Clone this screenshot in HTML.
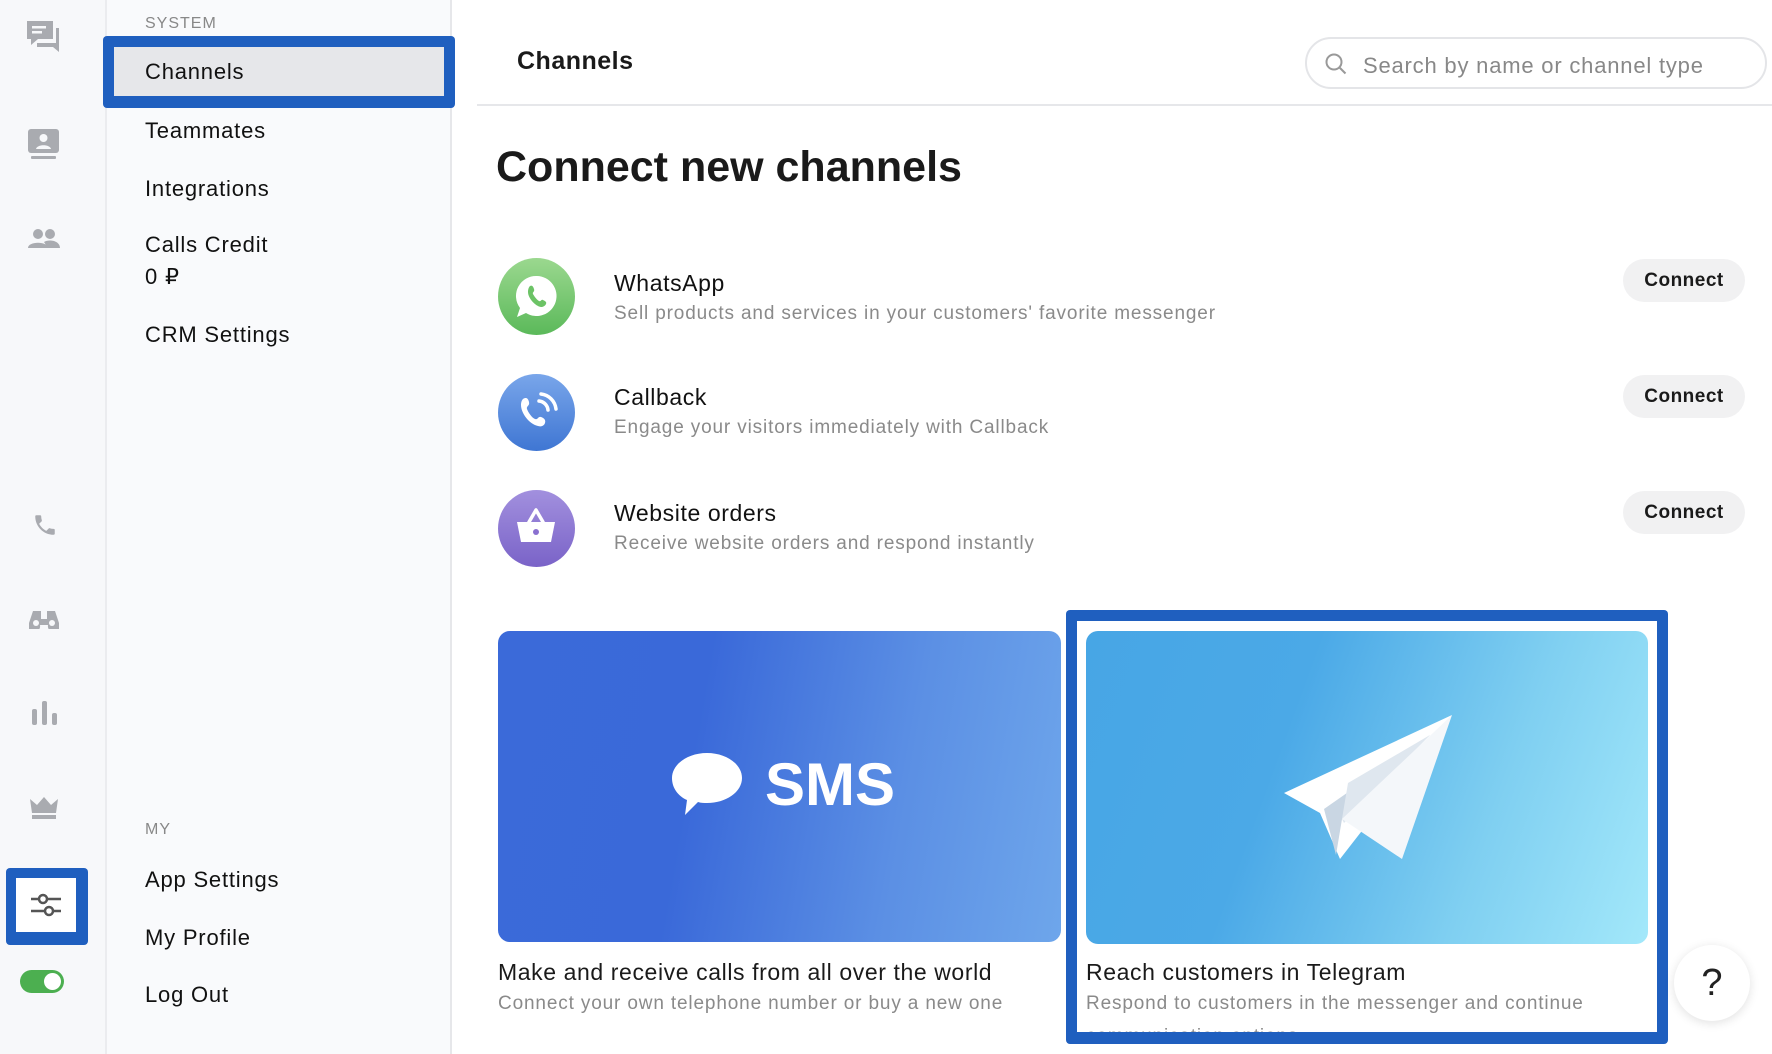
<!DOCTYPE html>
<html><head><meta charset="utf-8"><style>
*{margin:0;padding:0;box-sizing:border-box}
body{width:1772px;height:1054px;background:#fff;font-family:"Liberation Sans",sans-serif;color:#1a1a1a;position:relative;overflow:hidden}
.a{position:absolute;white-space:nowrap}
.rail{left:0;top:0;width:107px;height:1054px;background:#f7f8fa;border-right:2px solid #ebecef}
.side{left:107px;top:0;width:345px;height:1054px;background:#f9fafc;border-right:2px solid #e6e7ea}
.nav{left:145px;font-size:22px;letter-spacing:.8px;color:#111}
.lab{left:145px;font-size:16px;letter-spacing:1px;color:#888}
.ic{fill:#a9abb0}
.t{font-size:23px;color:#111;left:614px;letter-spacing:.6px}
.s{font-size:19px;color:#8a8a8a;left:614px;letter-spacing:.85px}
.btn{left:1623px;width:122px;height:43px;border-radius:22px;background:#f1f1f2;font-size:19px;font-weight:bold;text-align:center;line-height:43px;letter-spacing:.5px}
.circ{left:498px;width:77px;height:77px;border-radius:50%}
</style></head><body>
<div class="a rail"></div>
<div class="a side"></div>
<svg class="a" style="left:24px;top:18px" width="38" height="38" viewBox="0 0 38 38"><path class="ic" d="M3 3h26v18H14l-7 6v-6H3z"/><path class="ic" d="M32 10h3v24l-6-5H13v-4h19z"/><rect x="8" y="8" width="14" height="2.5" fill="#f7f8fa"/><rect x="8" y="13" width="10" height="2.5" fill="#f7f8fa"/></svg>
<svg class="a" style="left:27px;top:127px" width="34" height="38" viewBox="0 0 34 38"><rect class="ic" x="1" y="2" width="31" height="24" rx="3"/><circle cx="16.5" cy="11" r="4" fill="#f7f8fa"/><path d="M9 22c1-5 14-5 15 0z" fill="#f7f8fa"/><rect class="ic" x="4" y="29" width="25" height="3" rx="1"/></svg>
<svg class="a" style="left:28px;top:228px" width="32" height="22" viewBox="0 0 32 22"><circle class="ic" cx="10" cy="6" r="5"/><circle class="ic" cx="22" cy="6" r="5"/><path class="ic" d="M0 20c0-7 20-7 20 0zM16 14c4-3 16-2 16 6H20z"/></svg>
<svg class="a" style="left:32px;top:512px" width="26" height="26" viewBox="0 0 24 24"><path class="ic" d="M6.6 10.8c1.4 2.8 3.8 5.1 6.6 6.6l2.2-2.2c.3-.3.7-.4 1-.2 1.1.4 2.3.6 3.6.6.6 0 1 .4 1 1V20c0 .6-.4 1-1 1C10.6 21 3 13.4 3 4c0-.6.4-1 1-1h3.5c.6 0 1 .4 1 1 0 1.3.2 2.5.6 3.6.1.3 0 .7-.2 1z"/></svg>
<svg class="a" style="left:29px;top:607px" width="30" height="22" viewBox="0 0 30 22"><path class="ic" d="M4 4h8v8h6V4h8l4 12a6 6 0 1 1-11 2h-8a6 6 0 1 1-11-2z"/><circle cx="7" cy="16" r="3" fill="#f7f8fa"/><circle cx="23" cy="16" r="3" fill="#f7f8fa"/></svg>
<svg class="a" style="left:31px;top:700px" width="28" height="26" viewBox="0 0 28 26"><rect class="ic" x="1" y="9" width="5" height="16" rx="2"/><rect class="ic" x="11" y="1" width="5" height="24" rx="2"/><rect class="ic" x="21" y="13" width="5" height="12" rx="2"/></svg>
<svg class="a" style="left:29px;top:796px" width="30" height="24" viewBox="0 0 30 24"><path class="ic" d="M1 3l7 6 7-8 7 8 7-6-2 14H3z"/><rect class="ic" x="3" y="19" width="24" height="4"/></svg>
<div class="a" style="left:6px;top:868px;width:82px;height:77px;background:#1f5fbf;border-radius:4px"></div>
<div class="a" style="left:16px;top:878px;width:60px;height:54px;background:#fff"></div>
<svg class="a" style="left:30px;top:890px" width="32" height="30" viewBox="0 0 32 30"><path d="M1 9h30M1 21h30" stroke="#555" stroke-width="2.5"/><circle cx="13" cy="9" r="4" fill="#fff" stroke="#555" stroke-width="2.5"/><circle cx="19" cy="21" r="4" fill="#fff" stroke="#555" stroke-width="2.5"/></svg>
<div class="a" style="left:20px;top:970px;width:44px;height:23px;border-radius:12px;background:#4caf50"></div>
<div class="a" style="left:44px;top:973px;width:17px;height:17px;border-radius:50%;background:#fff"></div>
<div class="a lab" style="top:15px">SYSTEM</div>
<div class="a" style="left:103px;top:36px;width:352px;height:72px;background:#1f5fbf;border-radius:4px"></div>
<div class="a" style="left:114px;top:47px;width:330px;height:49px;background:#e6e7ea"></div>
<div class="a nav" style="top:59px">Channels</div>
<div class="a nav" style="top:118px">Teammates</div>
<div class="a nav" style="top:176px">Integrations</div>
<div class="a nav" style="top:232px">Calls Credit</div>
<div class="a nav" style="top:264px">0 ₽</div>
<div class="a nav" style="top:322px">CRM Settings</div>
<div class="a lab" style="top:821px">MY</div>
<div class="a nav" style="top:867px">App Settings</div>
<div class="a nav" style="top:925px">My Profile</div>
<div class="a nav" style="top:982px">Log Out</div>
<div class="a" style="left:517px;top:47px;font-size:25px;font-weight:bold;letter-spacing:.5px">Channels</div>
<div class="a" style="left:477px;top:104px;width:1295px;height:2px;background:#e6e7ea"></div>
<div class="a" style="left:1305px;top:37px;width:462px;height:52px;border:2px solid #e4e5e8;border-radius:26px"></div>
<svg class="a" style="left:1324px;top:52px" width="24" height="24" viewBox="0 0 24 24"><circle cx="10" cy="10" r="7.5" fill="none" stroke="#999" stroke-width="2"/><path d="M15.5 15.5l6 6" stroke="#999" stroke-width="2"/></svg>
<div class="a" style="left:1363px;top:53px;font-size:22px;color:#888;letter-spacing:.8px">Search by name or channel type</div>
<div class="a" style="left:496px;top:143px;font-size:43px;font-weight:bold;letter-spacing:0">Connect new channels</div>
<div class="a circ" style="top:258px;background:linear-gradient(#9bd88f,#5bb95a)"></div>
<svg class="a" style="left:513px;top:272px" width="48" height="50" viewBox="0 0 48 50"><path d="M24 4a20 20 0 1 1-11 37l-9 4 3-9A20 20 0 0 1 24 4z" fill="#fff"/><path d="M17 14c2-1 3 0 4 3s-2 3-1 5 4 6 6 7 2-2 4-1 4 2 3 4-3 3-5 3c-6-1-13-9-13-15 0-3 1-5 2-6z" fill="#6cc366"/></svg>
<div class="a t" style="top:270px">WhatsApp</div>
<div class="a s" style="top:303px">Sell products and services in your customers' favorite messenger</div>
<div class="a btn" style="top:259px">Connect</div>
<div class="a circ" style="top:374px;background:linear-gradient(#79a6ea,#3f76d3)"></div>
<svg class="a" style="left:515px;top:391px" width="44" height="44" viewBox="0 0 44 44"><path d="M8 8c3-2 5-1 6 3s-3 4-2 7 5 9 8 10 3-3 6-2 5 3 4 6-4 4-7 3C14 33 6 22 6 14c0-3 1-5 2-6z" fill="#fff"/><path d="M24 10a10 10 0 0 1 9 9M26 3a17 17 0 0 1 15 15" stroke="#fff" stroke-width="3.5" fill="none" stroke-linecap="round"/></svg>
<div class="a t" style="top:384px">Callback</div>
<div class="a s" style="top:417px">Engage your visitors immediately with Callback</div>
<div class="a btn" style="top:375px">Connect</div>
<div class="a circ" style="top:490px;background:linear-gradient(#a290de,#7a63c8)"></div>
<svg class="a" style="left:514px;top:507px" width="44" height="40" viewBox="0 0 44 40"><path d="M22 3l-7 12M22 3l7 12" stroke="#fff" stroke-width="3.5" stroke-linecap="round"/><path d="M3 15h38l-4 20H7z" fill="#fff"/><circle cx="22" cy="25" r="3" fill="#8a70d0"/></svg>
<div class="a t" style="top:500px">Website orders</div>
<div class="a s" style="top:533px">Receive website orders and respond instantly</div>
<div class="a btn" style="top:491px">Connect</div>
<div class="a" style="left:498px;top:631px;width:563px;height:311px;border-radius:12px;background:linear-gradient(100deg,#3b6ad9 0%,#3a69d9 35%,#5b8fe4 70%,#6ea6eb 100%)"></div>
<svg class="a" style="left:671px;top:751px" width="72" height="66" viewBox="0 0 72 66"><path d="M36 2c19 0 35 11 35 25S55 52 36 52c-3 0-6 0-9-1l-13 13 2-15C7 45 1 37 1 27 1 13 17 2 36 2z" fill="#fff"/></svg>
<div class="a" style="left:765px;top:750px;font-size:60px;font-weight:bold;color:#fff">SMS</div>
<div class="a" style="left:498px;top:959px;font-size:23px;letter-spacing:.6px">Make and receive calls from all over the world</div>
<div class="a s" style="left:498px;top:993px">Connect your own telephone number or buy a new one</div>
<div class="a" style="left:1066px;top:610px;width:602px;height:434px;background:#1f5fbf;border-radius:4px"></div>
<div class="a" style="left:1077px;top:621px;width:580px;height:411px;background:#fff;overflow:hidden">
<div class="a s" style="left:9px;top:405px">communication options</div></div>
<div class="a" style="left:1086px;top:631px;width:562px;height:313px;border-radius:12px;background:linear-gradient(110deg,#47a6e5 0%,#4ba9e7 35%,#7fcff1 70%,#a3e8fa 100%)"></div>
<svg class="a" style="left:1280px;top:713px" width="176" height="150" viewBox="0 0 176 150"><path d="M172 2L4 80 40 100 60 146 172 2z" fill="#fff"/><path d="M150 22L44 96l12 46 6-36z" fill="#c9d6e3"/><path d="M62 106l6-36 82-48-86 88z" fill="#dfe7ef"/><path d="M62 106l60 40 50-144z" fill="#f4f7fa"/></svg>
<div class="a" style="left:1086px;top:959px;font-size:23px;letter-spacing:.6px">Reach customers in Telegram</div>
<div class="a s" style="left:1086px;top:993px">Respond to customers in the messenger and continue</div>
<div class="a" style="left:1674px;top:945px;width:76px;height:76px;border-radius:50%;background:#fff;box-shadow:0 2px 10px rgba(0,0,0,.12);font-size:38px;text-align:center;line-height:76px;color:#222">?</div>
</body></html>
